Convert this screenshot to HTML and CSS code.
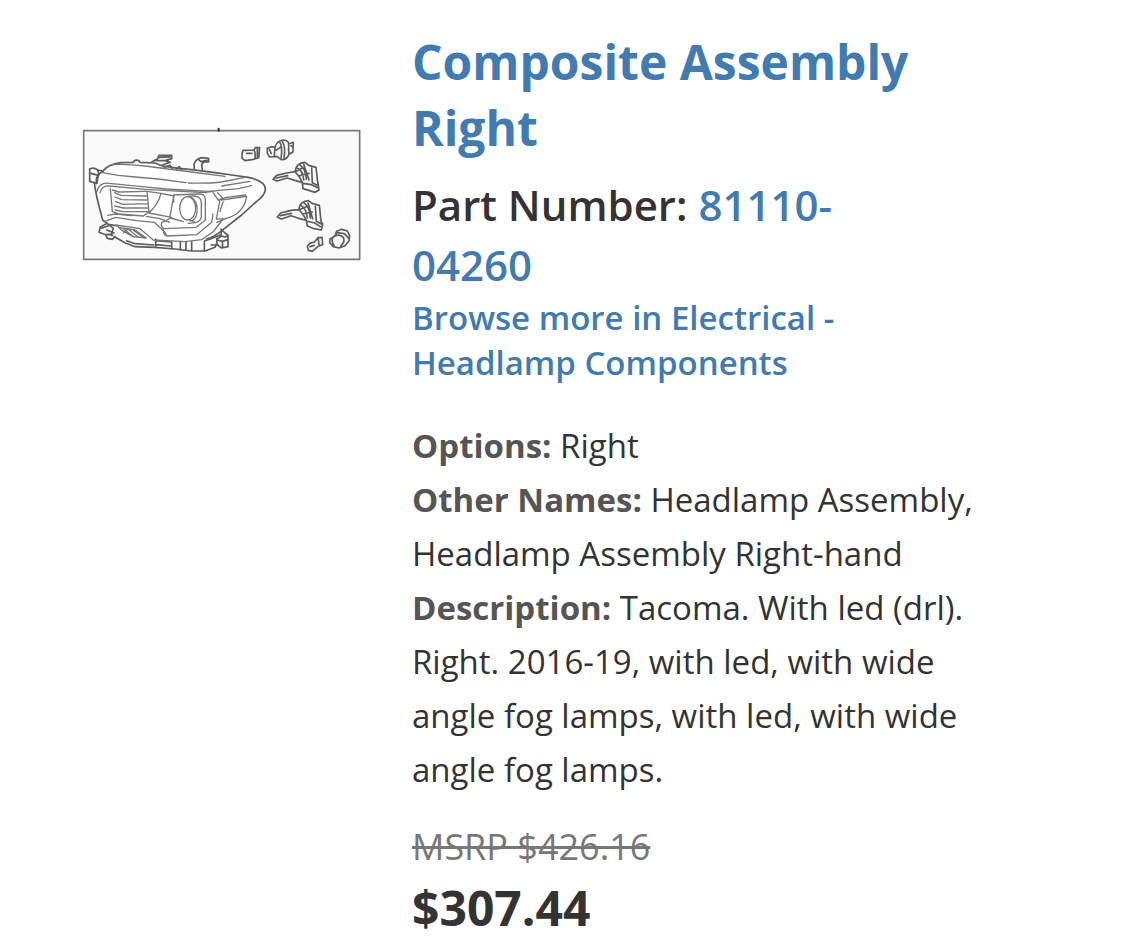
FILE: index.html
```html
<!DOCTYPE html>
<html lang="en">
<head>
<meta charset="utf-8">
<meta name="viewport" content="width=device-width, initial-scale=1">
<title>Composite Assembly Right</title>
<link rel="stylesheet" href="styles.css">
</head>
<body>
<main class="product">
  <div class="product-media">
    <svg class="diagram" viewBox="21 18 840 405" role="img" aria-label="Headlamp assembly diagram">
      <path class="frame" d="M26 32H854V418H26Z"/>
      <path class="tick" d="M431 26V32"/>
      <path class="body" d="M58 188Q66 160 84 153C96 138 115 130 140 128L240 129L310 145L420 158L520 172Q574 184 571 210Q568 228 545 244L445 328L420 382L350 393L180 380L83 300Z"/>
      <g class="outline">
        <path d="M65 190C60 170 72 160 84 153C96 138 115 130 140 128L175 127C178 118 192 118 195 127L240 129L262 138L310 145L350 149L420 158L470 165L520 172Q574 184 571 210Q568 228 545 244L500 285L445 328Q420 350 395 357"/>
        <path d="M65 190L44 184V147Q56 140 68 150L84 153M48 160L70 166L66 188M68 150L72 164"/>
        <path d="M58 188C62 225 72 260 83 300L100 313L130 318"/>
        <path d="M230 126L248 116L252 106H290V116L270 122L286 127L262 135M252 112L285 111M244 122H270M268 142L285 136L292 145M305 147L313 140L318 148"/>
        <path d="M358 148L357 132Q362 117 380 113L401 115V126L386 125L380 134L382 149M370 118L378 125L396 121"/>
        <path d="M97 310L76 321L72 337L92 344L97 355L112 358L120 350M80 325L105 316L115 325L110 342L92 344M95 330L117 339M101 344L113 346"/>
        <path d="M118 350L150 368L180 380L240 382L300 387L350 393H390L420 382L425 370M155 362L180 371L237 375"/>
        <path d="M242 357V379M242 362L290 366V386M242 374L288 378M316 365V389M333 367V391M350 365V391M388 363V392M388 363L408 356L438 344M408 375H430"/>
        <path d="M438 327L450 339L459 346V380L440 384L426 374L425 357L440 348L450 351L459 347M440 329L438 343M426 360L442 364L443 382M442 364L459 359"/>
      </g>
      <g class="line">
        <path d="M82 158L130 166L180 171L250 177L333 188M340 189Q400 191 440 186L510 172M110 134Q150 131 210 138L350 156L450 169M440 198L525 184"/>
        <path d="M65 216C70 196 82 187 103 190L200 200L275 207L400 214L490 206L530 197M75 218Q82 195 104 198L210 208L390 218L430 211"/>
        <path d="M106 206L112 275L132 282L205 288L222 276L216 214M112 210L132 216L214 214M119 218L138 226L214 228M120 231L140 239L216 240M121 244L143 253L219 251M119 258L145 264L219 264M120 270L144 275L220 275"/>
        <path d="M216 214L258 220Q250 253 222 278M258 220L296 228L285 290M222 279L290 292M214 289L255 296L284 307"/>
        <path d="M296 225L370 222Q391 221 391 239V300L364 322L268 326Q256 322 260 308L287 294L325 305M340 229Q380 223 379 250V290Q377 304 362 308L340 310"/>
        <ellipse cx="338" cy="265" rx="24" ry="35"/>
        <path d="M346 230Q370 244 366 279Q362 302 345 303M349 302L360 307M296 226V247"/>
        <path d="M90 304L122 292L185 302L238 307L269 336L276 348L365 344L410 307L414 282M98 286L122 282L170 287M265 326Q264 344 276 348"/>
        <path d="M122 315L195 326L235 360L330 365L380 359L414 336L442 300M130 322L180 330L214 354L174 350L142 332ZM143 325L178 352M158 326L192 353M173 329L208 354M145 339L160 326"/>
        <path d="M414 218L430 240L450 233L512 225M435 239L424 297L450 296Q474 290 488 279Q510 260 515 229L440 240M444 246L435 274M425 307L454 295M428 218L442 234"/>
      </g>
      <g class="outline part">
        <path d="M504 91Q499 104 502 116L510 122L536 118L551 113L554 83H541L537 90L512 91ZM537 90Q543 99 539 117M515 100H531M547 86V111"/>
        <path d="M577 85L589 80L600 82Q606 61 625 60Q641 62 641 72L655 67L654 96L642 103Q635 120 619 119L605 109L584 111L577 100ZM600 82L598 107M613 64Q624 80 618 115M622 64Q633 82 627 113M641 72Q640 89 642 103M604 90L616 82M583 88L589 101M648 77L654 82"/>
        <path d="M594 178L605 166L635 159L660 155Q663 128 690 127L701 136L723 142L728 186L732 210L720 217L704 212L684 206L682 187L659 181L637 174L606 183ZM660 155Q672 166 682 187M666 144Q684 150 686 180M674 134Q692 146 694 178M686 133L702 180M664 154L682 144M670 168L702 160M710 144L712 188L725 195M684 190L709 194L728 203M604 174L638 167"/>
        <path d="M607 291L617 279L648 271L671 269Q674 244 700 242L711 250L733 256L738 304L743 312L739 330L717 326L697 318L694 301L671 295L648 287L619 297ZM671 269Q684 280 694 301M678 256Q694 266 697 294M686 248Q704 260 706 294M699 249L713 296M676 268L694 260M682 282L712 276M721 259L724 304L739 312M694 303L719 309L736 320M616 287L649 280"/>
        <path d="M697 379L704 370L718 366L729 353L741 352L743 374L729 379L712 394L700 391ZM729 353L732 374M705 380L718 376"/>
        <path d="M765 357L780 348L785 334L800 328L817 333L824 347L822 362L810 377L792 384L775 380L764 368ZM780 348Q794 341 805 352Q812 364 797 378M785 338L808 341L822 356M774 351Q768 362 777 377"/>
      </g>
    </svg>
  </div>
  <article class="product-info">
    <header class="product-header">
      <h1 class="title"><a href="#product">Composite Assembly Right</a></h1>
      <h2 class="part-number">Part Number: <a href="#part">81110-<wbr>04260</a></h2>
      <a class="browse" href="#category">Browse more in Electrical - Headlamp Components</a>
    </header>
    <div class="details">
      <p><strong>Options:</strong> Right</p>
      <p><strong>Other Names:</strong> Headlamp Assembly, Headlamp Assembly Right-hand</p>
      <p><strong>Description:</strong> Tacoma. With led (drl). Right. 2016-19, with led, with wide angle fog lamps, with led, with wide angle fog lamps.</p>
    </div>
    <div class="pricing">
      <s class="msrp">MSRP $426.16</s>
      <strong class="price">$307.44</strong>
    </div>
  </article>
</main>
</body>
</html>
```
FILE: styles.css
```css
* {
  box-sizing: border-box;
}

body {
  margin: 0;
  background: #fff;
  color: #333;
  font-family: "Open Sans", "Noto Sans", sans-serif;
}

h1,
h2,
p {
  margin: 0;
}

a {
  color: #427bb0;
  text-decoration: none;
}

.product {
  display: flex;
  align-items: flex-start;
  gap: 50px;
  padding: 29px 125px 0 82px;
}

.product-media {
  flex: 0 0 280px;
  padding-top: 97px;
}

.diagram {
  display: block;
  width: 100%;
}

.diagram path,
.diagram ellipse {
  fill: none;
  stroke-linejoin: round;
  stroke-linecap: round;
}

.diagram .frame {
  fill: #fafafa;
  stroke: #777;
  stroke-width: 5;
}

.diagram .tick {
  stroke: #333;
  stroke-width: 6;
}

.diagram .body {
  fill: #fff;
}

.outline {
  stroke: #5c5c5c;
  stroke-width: 5;
}

.line {
  stroke: #777;
  stroke-width: 4;
}

.product-info {
  flex: 1;
  min-width: 0;
}

.product-header {
  padding-right: 60px;
}

.title {
  font-size: 48px;
  font-weight: 700;
  line-height: 66px;
}

.part-number {
  margin-top: 14px;
  font-size: 42px;
  font-weight: 600;
  line-height: 60px;
}

.browse {
  display: block;
  font-size: 33px;
  font-weight: 600;
  line-height: 45px;
}

.details {
  margin-top: 34px;
  font-size: 33px;
  line-height: 54px;
}

.details strong {
  color: #555;
}

.pricing {
  display: flex;
  flex-direction: column;
  align-items: flex-start;
  gap: 1px;
  margin-top: 23px;
}

.msrp {
  color: #777;
  font-size: 36px;
  line-height: 54px;
}

.price {
  font-size: 48px;
  line-height: 66px;
}
```
